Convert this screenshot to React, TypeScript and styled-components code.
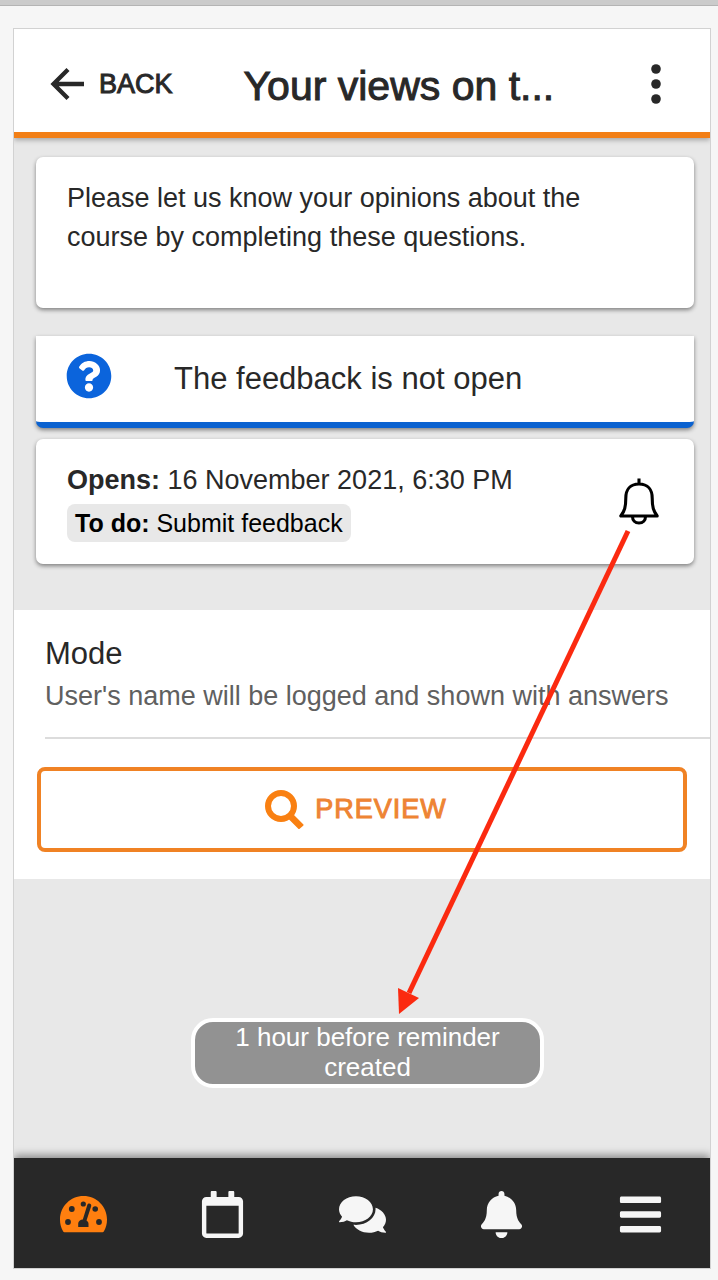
import React from 'react';
import styled, { createGlobalStyle } from 'styled-components';
import { FaBars, FaBell, FaComments, FaQuestionCircle, FaRegCalendar } from 'react-icons/fa';

const GlobalStyle = createGlobalStyle`
  *, *::before, *::after { box-sizing: border-box; }
  body {
    margin: 0;
    background: #f6f6f6;
    color: #282828;
    font-family: "Liberation Sans", Arial, sans-serif;
  }
  h1, h2, p { margin: 0; font-weight: 400; }
  button { font: inherit; color: inherit; background: none; border: 0; padding: 0; cursor: pointer; }
  svg { display: block; flex: none; }
`;

const Page = styled.div`
  display: flex;
  flex-direction: column;
  min-height: 100vh;
  padding: 0 7px 11px 13px;
  border-top: 5px solid #cbcbcb;
  box-shadow: inset 0 1px 0 #b4b4b4;
`;

const Screen = styled.div`
  position: relative;
  display: flex;
  flex: 1;
  flex-direction: column;
  margin-top: 23px;
  border: 1px solid #d2d2d2;
  background: #e8e8e8;
  overflow: clip;
`;

const Header = styled.header`
  display: flex;
  align-items: center;
  height: 109px;
  padding: 6px 34px 0 36px;
  background: #fff;
  border-bottom: 6px solid #f27f16;
  box-shadow: 0 2px 5px rgba(0, 0, 0, 0.3);
`;

const BackButton = styled.button`
  display: flex;
  align-items: center;
  gap: 15px;
  margin-right: 71px;
  font-size: 27px;
  line-height: 32px;
  -webkit-text-stroke: 1px #282828;
  svg { -webkit-text-stroke: 0; }
`;

const Title = styled.h1`
  flex: 1;
  min-width: 0;
  padding-top: 4px;
  font-size: 41px;
  line-height: 48px;
  white-space: nowrap;
  -webkit-text-stroke: 1px #282828;
`;

const Content = styled.main`
  display: flex;
  flex: 1;
  flex-direction: column;
`;

const CardList = styled.div`
  display: flex;
  flex-direction: column;
  padding: 19px 16px 46px 22px;
`;

const Card = styled.section`
  background: #fff;
  border-radius: 7px;
  box-shadow: 0 2px 4px rgba(0, 0, 0, 0.45);
`;

const IntroCard = styled(Card)`
  min-height: 151px;
  margin-bottom: 28px;
  padding: 22px 31px;
  font-size: 27px;
  line-height: 39px;
`;

const StatusCard = styled(Card)`
  display: flex;
  align-items: center;
  gap: 62px;
  height: 92px;
  margin-bottom: 11px;
  padding: 0 30px;
  border-bottom: 6px solid #0b62d0;
  border-radius: 0 0 7px 7px;
  font-size: 31px;
  line-height: 38px;
  svg { color: #0b64dc; margin-bottom: 6px; }
`;

const DatesCard = styled(Card)`
  display: flex;
  align-items: center;
  justify-content: space-between;
  min-height: 125px;
  padding: 0 35px 0 31px;
`;

const DateLine = styled.p`
  font-size: 27px;
  line-height: 38px;
`;

const Todo = styled.p`
  display: inline-block;
  margin-top: 5px;
  padding: 0 8px;
  border-radius: 8px;
  background: #e8e8e8;
  color: #000;
  font-size: 25px;
  line-height: 38px;
`;

const Details = styled.section`
  padding-bottom: 27px;
  background: #fff;
`;

const Mode = styled.div`
  margin-left: 31px;
  padding: 23px 0 20px;
  border-bottom: 2px solid #dcdcdc;
`;

const ModeTitle = styled.h2`
  font-size: 31px;
  line-height: 42px;
`;

const ModeText = styled.p`
  color: #606060;
  font-size: 27px;
  line-height: 42px;
  white-space: nowrap;
`;

const PreviewButton = styled.button`
  display: flex;
  align-items: center;
  justify-content: center;
  gap: 11px;
  width: calc(100% - 46px);
  height: 85px;
  margin: 28px 23px 0;
  && {
    padding-right: 12px;
    border: 4px solid #f08224;
    color: #ee8434;
  }
  border-radius: 8px;
  font-size: 27px;
  letter-spacing: 1px;
  -webkit-text-stroke: 1px #ee8434;
  svg { -webkit-text-stroke: 0; }
`;

const TabBar = styled.nav`
  display: flex;
  height: 110px;
  padding-top: 2px;
  background: #282828;
  box-shadow: 0 -3px 8px rgba(0, 0, 0, 0.4);
`;

const Tab = styled.button<{ $active?: boolean }>`
  display: flex;
  flex: 1;
  align-items: center;
  justify-content: center;
  && { color: ${(p) => (p.$active ? '#ff7f0f' : '#f6f6f6')}; }
`;

const Toast = styled.div`
  position: absolute;
  right: 166px;
  bottom: 180px;
  left: 177px;
  padding: 0 24px 2px;
  border: 4px solid #fff;
  border-radius: 22px;
  background: #929292;
  color: #fff;
  font-size: 26px;
  line-height: 30px;
  text-align: center;
`;

const Pointer = styled.svg`
  position: absolute;
  top: 500px;
  right: 79px;
  pointer-events: none;
`;

const BackArrow = () => (
  <svg width="34" height="34" viewBox="0 0 34 34" fill="none" stroke="#282828" strokeWidth="4.3" aria-hidden>
    <path d="M34 17H4M18 2.500 3.500 17 18 31.500" />
  </svg>
);

const Dots = () => (
  <svg width="40" height="40" viewBox="0 0 40 40" fill="#282828" aria-hidden>
    <circle cx="20" cy="5" r="4.8" />
    <circle cx="20" cy="20" r="4.8" />
    <circle cx="20" cy="35" r="4.8" />
  </svg>
);

const Magnifier = () => (
  <svg width="39" height="39" viewBox="0 0 39 39" aria-hidden>
    <circle cx="16" cy="16" r="13" fill="none" stroke="#f98012" strokeWidth="6" />
    <path fill="#f98012" stroke="#f98012" strokeWidth="2" strokeLinejoin="round" d="M25 27.500 27.500 25l10 10-3.500 3-9-9Z" />
  </svg>
);

const BellOutline = () => (
  <svg width="40" height="47" viewBox="0 0 40 47" fill="none" stroke="#000" strokeWidth="3.100" strokeLinejoin="round" aria-hidden>
    <path d="M20 .5v5M20 6C11 6 6.800 12 6.800 20c0 9-1.200 13-5 18h36.400c-3.800-5-5-9-5-18C33.200 12 29 6 20 6Z" />
    <path d="M13.500 38.500c0 4 2.500 6.500 6.500 6.500s6.500-2.500 6.500-6.500" />
  </svg>
);

const Gauge = () => (
  <svg width="47" height="38" viewBox="0 0 47 38" aria-hidden>
    <path fill="currentColor" d="M23.500 1C10.500 1 0 11.500 0 24.500c0 4.600 1 8 2.800 11.200.5 1 1.200 1.500 2.300 1.500h36.800c1.100 0 1.800-.5 2.300-1.500C46 32.500 47 29.100 47 24.500 47 11.500 36.500 1 23.500 1Z" />
    <g fill="#282828">
      <circle cx="8" cy="27" r="2.900" />
      <circle cx="11.800" cy="14" r="2.900" />
      <circle cx="23.300" cy="9" r="2.600" />
      <circle cx="35.200" cy="14" r="2.800" />
      <circle cx="39" cy="27" r="2.900" />
      <path d="M18.200 32v-3.500c0-2.300 2.200-4 4.600-4.100L27.300 10c.8-2.600 4.600-1.500 3.900 1.200l-4.700 14.300c1.300.8 2 1.800 2 3.400V32Z" />
    </g>
  </svg>
);

export default function App() {
  return (
    <>
      <GlobalStyle />
      <Page>
        <Screen>
          <Header>
            <BackButton type="button"><BackArrow />BACK</BackButton>
            <Title>Your views on t...</Title>
            <button type="button" aria-label="More options"><Dots /></button>
          </Header>
          <Content>
            <CardList>
              <IntroCard>
                <p>Please let us know your opinions about the course by completing these questions.</p>
              </IntroCard>
              <StatusCard>
                <FaQuestionCircle size={46} />
                <p>The feedback is not open</p>
              </StatusCard>
              <DatesCard>
                <div>
                  <DateLine><b>Opens:</b> 16 November 2021, 6:30 PM</DateLine>
                  <Todo><b>To do:</b> Submit feedback</Todo>
                </div>
                <button type="button" aria-label="Set reminder"><BellOutline /></button>
              </DatesCard>
            </CardList>
            <Details>
              <Mode>
                <ModeTitle>Mode</ModeTitle>
                <ModeText>User's name will be logged and shown with answers</ModeText>
              </Mode>
              <PreviewButton type="button"><Magnifier />PREVIEW</PreviewButton>
            </Details>
          </Content>
          <TabBar>
            <Tab type="button" $active aria-label="Dashboard"><Gauge /></Tab>
            <Tab type="button" aria-label="Calendar"><FaRegCalendar size={47} /></Tab>
            <Tab type="button" aria-label="Messages"><FaComments size={47} /></Tab>
            <Tab type="button" aria-label="Notifications"><FaBell size={47} /></Tab>
            <Tab type="button" aria-label="Menu"><FaBars size={47} /></Tab>
          </TabBar>
          <Toast role="status">1 hour before reminder created</Toast>
          <Pointer width="236" height="486" viewBox="0 0 236 486" aria-hidden>
            <path d="M233 2 14 464" fill="none" stroke="#fb2a10" strokeWidth="5" />
            <path d="M3 459 24 469 4 485Z" fill="#fb2a10" />
          </Pointer>
        </Screen>
      </Page>
    </>
  );
}
